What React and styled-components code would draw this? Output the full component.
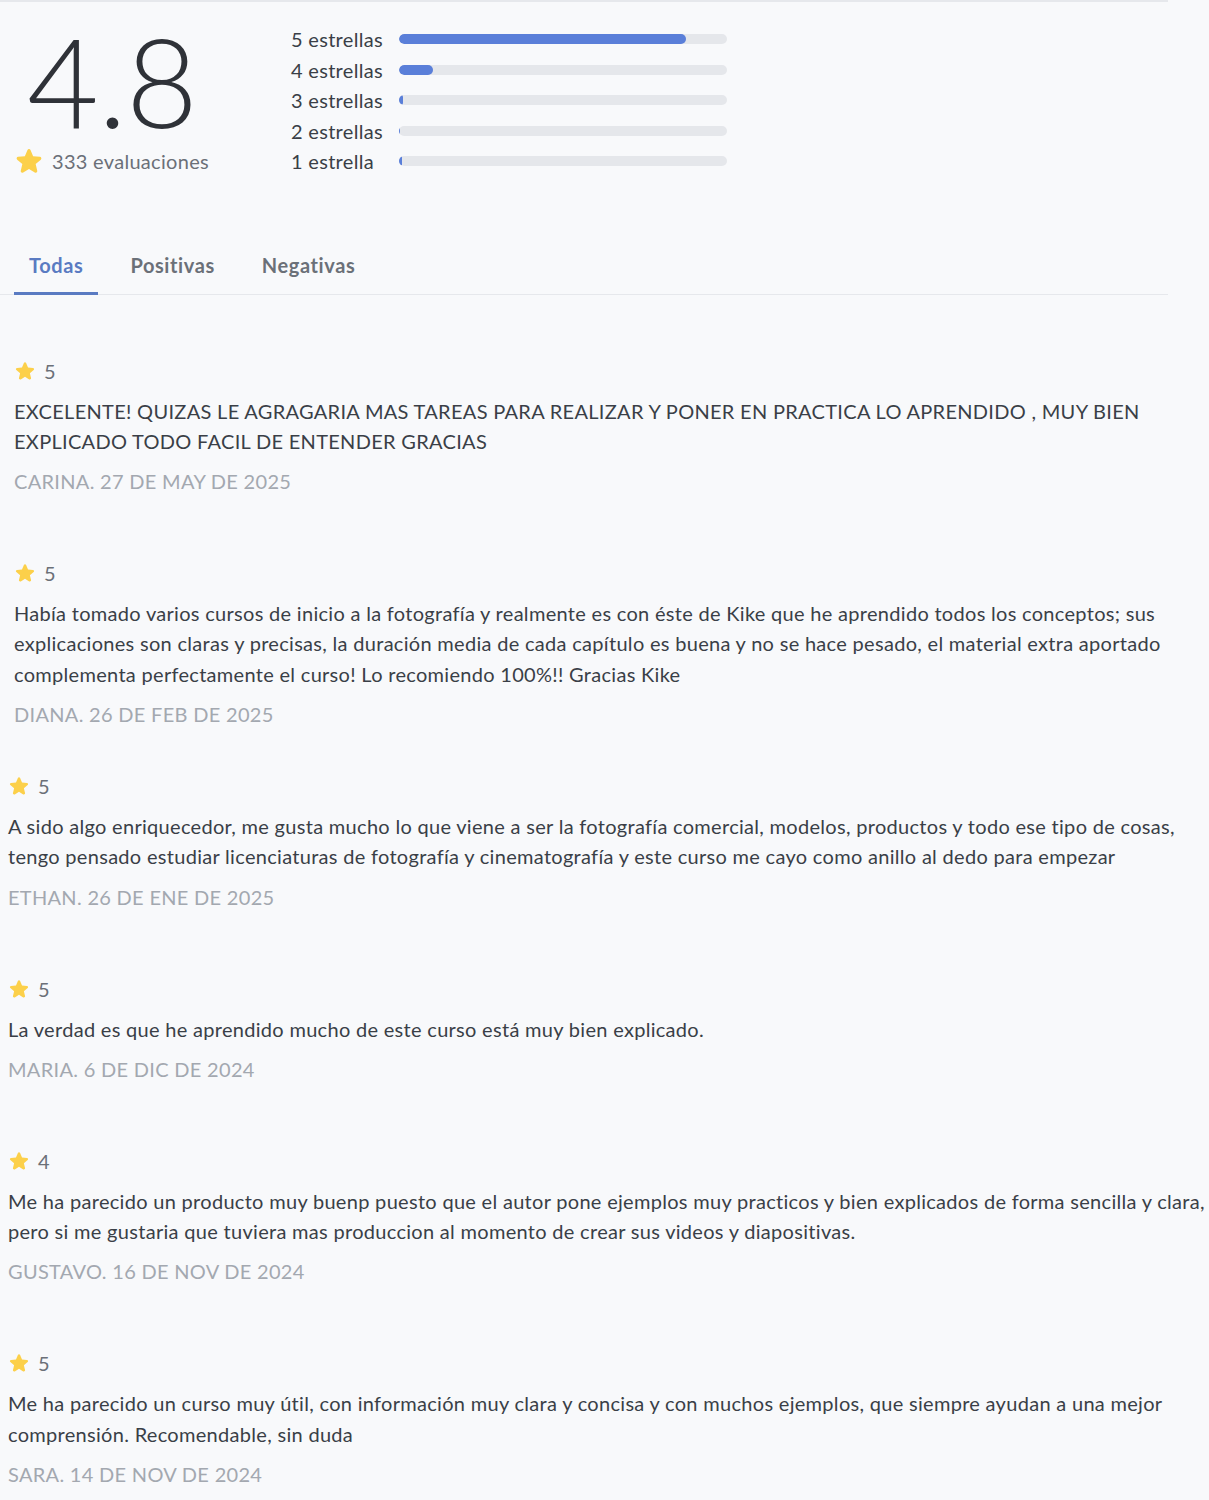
import React, { useState } from 'react';
import styled, { createGlobalStyle } from 'styled-components';

const GlobalStyle = createGlobalStyle`
  body {
    margin: 0;
    background: #f8f9fb;
    font-family: Lato, "Open Sans", sans-serif;
    color: #3a3f47;
    letter-spacing: 0.3px;
  }
`;

const Page = styled.div`
  width: 1209px;
  padding-bottom: 20px;
`;

const Header = styled.div`
  width: 1168px;
  border-top: 2px solid #e6e8ec;
`;

const Summary = styled.div`
  display: flex;
  align-items: flex-start;
  gap: 81px;
  padding: 16px 0 0 14px;
`;

const ScoreCol = styled.div`
  width: 196px;
  display: flex;
  flex-direction: column;
  align-items: center;
`;

const Score = styled.div`
  font-size: 124px;
  font-weight: 300;
  line-height: 124px;
  color: #2f3238;
  letter-spacing: -1px;
`;

const CountRow = styled.div`
  align-self: stretch;
  display: flex;
  align-items: center;
  gap: 8px;
  height: 30px;
  margin-top: 4px;
  font-size: 20px;
  white-space: nowrap;
  color: #6b7078;

  svg {
    flex-shrink: 0;
  }
`;

const Bars = styled.div`
  display: flex;
  flex-direction: column;
  padding-top: 6px;
`;

const BarRow = styled.div`
  display: flex;
  align-items: center;
  height: 30.5px;
`;

const BarLabel = styled.span`
  width: 108px;
  font-size: 20px;
  color: #3a3f47;
`;

const Track = styled.div`
  width: 328px;
  height: 10px;
  border-radius: 5px;
  background: #e5e7eb;
  overflow: hidden;
`;

const Fill = styled.div`
  height: 100%;
  border-radius: 5px;
  background: #5a7fd9;
`;

const Tabs = styled.div`
  display: flex;
  gap: 17px;
  margin-top: 73px;
  padding-left: 14px;
  border-bottom: 1px solid #e6e8ec;
`;

const Tab = styled.button`
  border: 0;
  background: none;
  font-family: inherit;
  font-size: 20px;
  font-weight: 700;
  letter-spacing: 0.6px;
  line-height: 30px;
  padding: 0 15px 12px;
  margin-bottom: -1px;
  cursor: pointer;
  color: ${({ active }) => (active ? '#5a7bc2' : '#6b7078')};
  border-bottom: 3px solid ${({ active }) => (active ? '#5a7bc2' : 'transparent')};
`;

const Lists = styled.div`
  display: flex;
  flex-direction: column;
  gap: 42px;
  padding-top: 61px;
`;

const Group = styled.div`
  display: flex;
  flex-direction: column;
  gap: 62px;
  width: ${({ wide }) => (wide ? '1209px' : '1168px')};
  padding-left: ${({ wide }) => (wide ? '8px' : '14px')};
  box-sizing: border-box;
`;

const Review = styled.div`
  display: flex;
  flex-direction: column;
`;

const Rating = styled.div`
  display: flex;
  align-items: center;
  gap: 8px;
  height: 30px;
  font-size: 20px;
  color: #6b7078;
`;

const Body = styled.p`
  margin: 10px 0 0;
  font-size: 20px;
  line-height: 30.3px;
  color: #3a3f47;
`;

const Author = styled.div`
  margin-top: 10px;
  font-size: 20px;
  line-height: 30px;
  color: #a3a8b0;
  text-transform: uppercase;
`;

const Star = ({ size = 22 }) => (
  <svg width={size} height={size} viewBox="0 0 24 24" fill="#fcd04a">
    <path
      fillRule="evenodd"
      d="M10.788 3.21c.448-1.077 1.976-1.077 2.424 0l2.082 5.006 5.404.434c1.164.093 1.636 1.545.749 2.305l-4.117 3.527 1.257 5.273c.271 1.136-.964 2.033-1.96 1.425L12 18.354 7.373 21.18c-.996.608-2.231-.29-1.96-1.425l1.257-5.273-4.117-3.527c-.887-.76-.415-2.212.749-2.305l5.404-.434 2.082-5.005Z"
    />
  </svg>
);

const bars = [
  { label: '5 estrellas', pct: 87.5 },
  { label: '4 estrellas', pct: 10.4 },
  { label: '3 estrellas', pct: 1.2 },
  { label: '2 estrellas', pct: 0.3 },
  { label: '1 estrella', pct: 1 },
];

const first = [
  {
    stars: 5,
    text: 'EXCELENTE! QUIZAS LE AGRAGARIA MAS TAREAS PARA REALIZAR Y PONER EN PRACTICA LO APRENDIDO , MUY BIEN EXPLICADO TODO FACIL DE ENTENDER GRACIAS',
    author: 'Carina. 27 de may de 2025',
  },
  {
    stars: 5,
    text: 'Había tomado varios cursos de inicio a la fotografía y realmente es con éste de Kike que he aprendido todos los conceptos; sus explicaciones son claras y precisas, la duración media de cada capítulo es buena y no se hace pesado, el material extra aportado complementa perfectamente el curso! Lo recomiendo 100%!! Gracias Kike',
    author: 'Diana. 26 de feb de 2025',
  },
];

const rest = [
  {
    stars: 5,
    text: 'A sido algo enriquecedor, me gusta mucho lo que viene a ser la fotografía comercial, modelos, productos y todo ese tipo de cosas, tengo pensado estudiar licenciaturas de fotografía y cinematografía y este curso me cayo como anillo al dedo para empezar',
    author: 'Ethan. 26 de ene de 2025',
  },
  {
    stars: 5,
    text: 'La verdad es que he aprendido mucho de este curso está muy bien explicado.',
    author: 'Maria. 6 de dic de 2024',
  },
  {
    stars: 4,
    text: 'Me ha parecido un producto muy buenp puesto que el autor pone ejemplos muy practicos y bien explicados de forma sencilla y clara, pero si me gustaria que tuviera mas produccion al momento de crear sus videos y diapositivas.',
    author: 'Gustavo. 16 de nov de 2024',
  },
  {
    stars: 5,
    text: 'Me ha parecido un curso muy útil, con información muy clara y concisa y con muchos ejemplos, que siempre ayudan a una mejor comprensión. Recomendable, sin duda',
    author: 'Sara. 14 de nov de 2024',
  },
];

const ReviewItem = ({ review }) => (
  <Review>
    <Rating>
      <Star />
      {review.stars}
    </Rating>
    <Body>{review.text}</Body>
    <Author>{review.author}</Author>
  </Review>
);

export default function App() {
  const [tab, setTab] = useState('Todas');
  return (
    <Page>
      <GlobalStyle />
      <Header>
        <Summary>
          <ScoreCol>
            <Score>4.8</Score>
            <CountRow>
              <Star size={30} />
              333 evaluaciones
            </CountRow>
          </ScoreCol>
          <Bars>
            {bars.map(b => (
              <BarRow key={b.label}>
                <BarLabel>{b.label}</BarLabel>
                <Track>
                  <Fill style={{ width: `${b.pct}%` }} />
                </Track>
              </BarRow>
            ))}
          </Bars>
        </Summary>
        <Tabs>
          {['Todas', 'Positivas', 'Negativas'].map(t => (
            <Tab key={t} active={tab === t} onClick={() => setTab(t)}>
              {t}
            </Tab>
          ))}
        </Tabs>
      </Header>
      <Lists>
        <Group>
          {first.map(r => (
            <ReviewItem key={r.author} review={r} />
          ))}
        </Group>
        <Group wide>
          {rest.map(r => (
            <ReviewItem key={r.author} review={r} />
          ))}
        </Group>
      </Lists>
    </Page>
  );
}
